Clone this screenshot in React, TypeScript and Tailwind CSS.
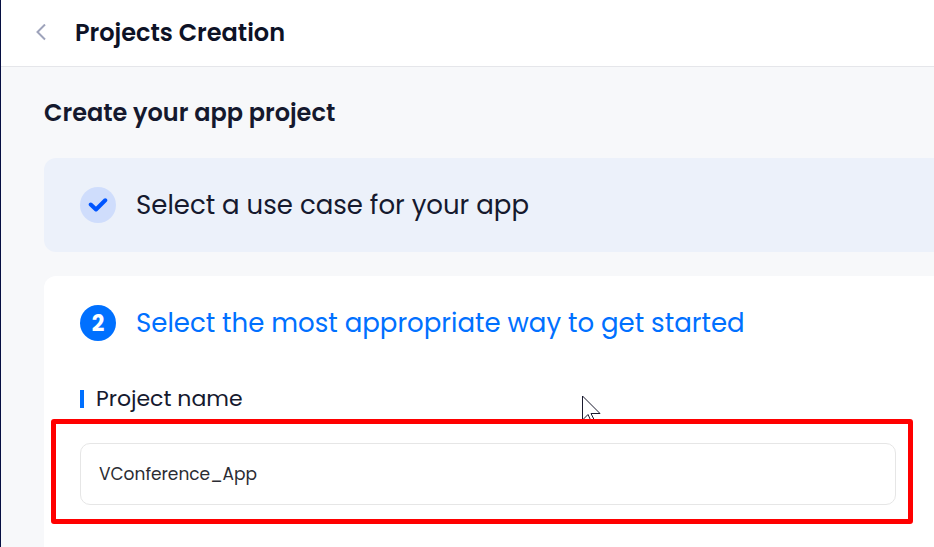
import { useState } from "react";

function BackIcon() {
    return (
        <svg width="12" height="18" viewBox="0 0 12 18" fill="none" stroke="#9ea3bb" strokeWidth="2">
            <path d="M10 .5 2.5 8l7.5 7.5" />
        </svg>
    );
}

function CheckIcon() {
    return (
        <svg width="20" height="16" viewBox="0 0 20 16" fill="none" stroke="#0055ff" strokeWidth="4" strokeLinecap="round" strokeLinejoin="round">
            <path d="M2.75 7.5 8 12.5 17.25 3.25" />
        </svg>
    );
}

function Pointer() {
    return (
        <svg width="20" height="28" viewBox="0 0 20 28" fill="#ffffff" stroke="#1a1a2e" strokeWidth="1">
            <path d="M1.5 1v24l5.5-5.5 3.5 7.5 3-1.5-3.5-7h9z" />
        </svg>
    );
}

export default function App() {
    const [name, setName] = useState("VConference_App");

    return (
        <div className="flex min-h-screen flex-col overflow-hidden border-l border-[#060f42] bg-[#f7f8fa] font-[Poppins,Inter,sans-serif] text-[#15192e]">
            {/* Header */}
            <header className="flex items-center gap-7 border-b border-[#e5e6ea] bg-white px-[34px] py-4">
                <button type="button" aria-label="Back">
                    <BackIcon />
                </button>
                <h1 className="text-2xl leading-[34px] font-semibold whitespace-nowrap text-[#0d1226]">Projects Creation</h1>
            </header>

            <main className="flex flex-1 flex-col gap-6 pt-7 pl-[43px]">
                <h2 className="pb-[3px] text-2xl leading-9 font-semibold">Create your app project</h2>

                {/* Step 1, done */}
                <section className="flex items-center gap-5 rounded-l-xl bg-[#ecf1fa] px-9 py-[29px]">
                    <span className="flex size-9 shrink-0 items-center justify-center rounded-full bg-[#cfddfc]">
                        <CheckIcon />
                    </span>
                    <h3 className="text-[26px] leading-9">Select a use case for your app</h3>
                </section>

                {/* Step 2, current */}
                <section className="flex-1 rounded-tl-xl bg-white pt-[29px] pr-[38px] pb-10 pl-9">
                    <div className="flex items-center gap-5 text-[#0070ff]">
                        <span className="flex size-9 shrink-0 items-center justify-center rounded-full bg-[#0070ff] text-[22px] font-bold text-white">
                            2
                        </span>
                        <h3 className="text-[26px] leading-9">Select the most appropriate way to get started</h3>
                    </div>

                    <div className="relative mt-10">
                        <label htmlFor="project-name" className="flex items-center gap-3 text-[22px] leading-9">
                            <span className="h-[18px] w-1 bg-[#0070ff]" />
                            Project name
                        </label>
                        <div className="pointer-events-none absolute top-[14px] left-[501px]">
                            <Pointer />
                        </div>

                        <div className="relative mt-[26px]">
                            <input
                                id="project-name"
                                type="text"
                                value={name}
                                onChange={(e) => setName(e.target.value)}
                                className="block h-[62px] w-full rounded-[10px] border border-[#e6e6e6] bg-white px-[18px] text-[17px] text-[#2b2c33] outline-none"
                            />
                            {/* Highlight around the field */}
                            <div className="pointer-events-none absolute -top-6 -right-[17px] -bottom-[19px] -left-[29px] rounded-[3px] border-5 border-[#ff0000]" />
                        </div>
                    </div>
                </section>
            </main>
        </div>
    );
}
